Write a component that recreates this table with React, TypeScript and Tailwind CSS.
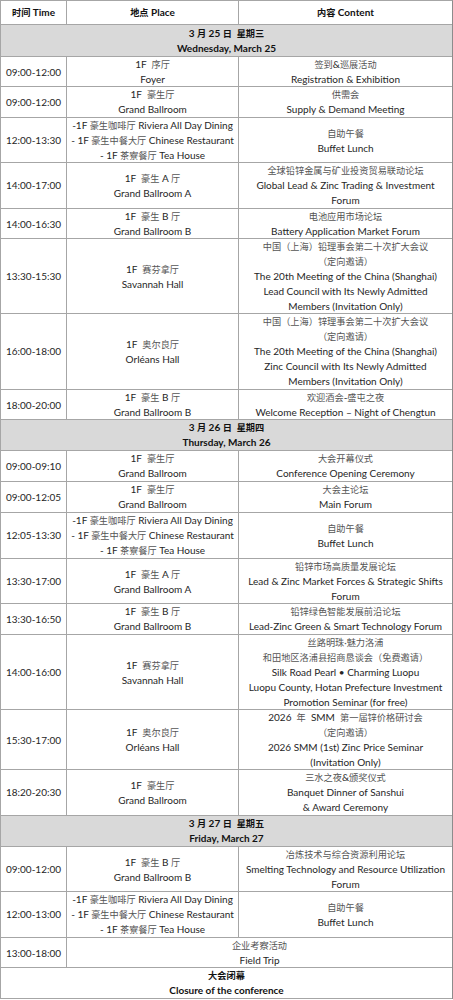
import React from "react";

type Row =
  | { kind: "head" }
  | { kind: "day"; h: number; cn: string; en: string }
  | { kind: "row"; h: number; time: string; place: string[]; content: string[] }
  | { kind: "trip"; h: number; time: string; content: string[] }
  | { kind: "close"; h: number; cn: string; en: string };

const dining = ["-1F 豪生咖啡厅 Riviera All Day Dining", "- 1F 豪生中餐大厅 Chinese Restaurant", "- 1F 茶寮餐厅 Tea House"];
const lunch = ["自助午餐", "Buffet Lunch"];

const rows: Row[] = [
  { kind: "head" },
  { kind: "day", h: 32, cn: "3 月 25 日  星期三", en: "Wednesday, March 25" },
  { kind: "row", h: 30, time: "09:00-12:00", place: ["1F  序厅", "Foyer"], content: ["签到&巡展活动", "Registration & Exhibition"] },
  { kind: "row", h: 31, time: "09:00-12:00", place: ["1F  豪生厅", "Grand Ballroom"], content: ["供需会", "Supply & Demand Meeting"] },
  { kind: "row", h: 45, time: "12:00-13:30", place: dining, content: lunch },
  {
    kind: "row",
    h: 46,
    time: "14:00-17:00",
    place: ["1F  豪生 A 厅", "Grand Ballroom A"],
    content: ["全球铅锌金属与矿业投资贸易联动论坛", "Global Lead & Zinc Trading & Investment", "Forum"],
  },
  { kind: "row", h: 30, time: "14:00-16:30", place: ["1F  豪生 B 厅", "Grand Ballroom B"], content: ["电池应用市场论坛", "Battery Application Market Forum"] },
  {
    kind: "row",
    h: 75,
    time: "13:30-15:30",
    place: ["1F  赛芬拿厅", "Savannah Hall"],
    content: ["中国（上海）铅理事会第二十次扩大会议", "（定向邀请）", "The 20th Meeting of the China (Shanghai)", "Lead Council with Its Newly Admitted", "Members (Invitation Only)"],
  },
  {
    kind: "row",
    h: 76,
    time: "16:00-18:00",
    place: ["1F  奥尔良厅", "Orléans Hall"],
    content: ["中国（上海）锌理事会第二十次扩大会议", "（定向邀请）", "The 20th Meeting of the China (Shanghai)", "Zinc Council with Its Newly Admitted", "Members (Invitation Only)"],
  },
  { kind: "row", h: 30, time: "18:00-20:00", place: ["1F  豪生 B 厅", "Grand Ballroom B"], content: ["欢迎酒会-盛屯之夜", "Welcome Reception – Night of Chengtun"] },
  { kind: "day", h: 31, cn: "3 月 26 日  星期四", en: "Thursday, March 26" },
  { kind: "row", h: 31, time: "09:00-09:10", place: ["1F  豪生厅", "Grand Ballroom"], content: ["大会开幕仪式", "Conference Opening Ceremony"] },
  { kind: "row", h: 31, time: "09:00-12:05", place: ["1F  豪生厅", "Grand Ballroom"], content: ["大会主论坛", "Main Forum"] },
  { kind: "row", h: 46, time: "12:05-13:30", place: dining, content: lunch },
  {
    kind: "row",
    h: 45,
    time: "13:30-17:00",
    place: ["1F  豪生 A 厅", "Grand Ballroom A"],
    content: ["铅锌市场高质量发展论坛", "Lead & Zinc Market Forces & Strategic Shifts", "Forum"],
  },
  {
    kind: "row",
    h: 31,
    time: "13:30-16:50",
    place: ["1F  豪生 B 厅", "Grand Ballroom B"],
    content: ["铅锌绿色智能发展前沿论坛", "Lead-Zinc Green & Smart Technology Forum"],
  },
  {
    kind: "row",
    h: 75,
    time: "14:00-16:00",
    place: ["1F  赛芬拿厅", "Savannah Hall"],
    content: ["丝路明珠·魅力洛浦", "和田地区洛浦县招商恳谈会（免费邀请）", "Silk Road Pearl • Charming Luopu", "Luopu County, Hotan Prefecture Investment", "Promotion Seminar (for free)"],
  },
  {
    kind: "row",
    h: 60,
    time: "15:30-17:00",
    place: ["1F  奥尔良厅", "Orléans Hall"],
    content: ["2026  年  SMM  第一届锌价格研讨会", "（定向邀请）", "2026 SMM (1st) Zinc Price Seminar", "(Invitation Only)"],
  },
  {
    kind: "row",
    h: 46,
    time: "18:20-20:30",
    place: ["1F  豪生厅", "Grand Ballroom"],
    content: ["三水之夜&颁奖仪式", "Banquet Dinner of Sanshui", "& Award Ceremony"],
  },
  { kind: "day", h: 31, cn: "3 月 27 日  星期五", en: "Friday, March 27" },
  {
    kind: "row",
    h: 45,
    time: "09:00-12:00",
    place: ["1F  豪生 B 厅", "Grand Ballroom B"],
    content: ["冶炼技术与综合资源利用论坛", "Smelting Technology and Resource Utilization", "Forum"],
  },
  { kind: "row", h: 46, time: "12:00-13:00", place: dining, content: lunch },
  { kind: "trip", h: 30, time: "13:00-18:00", content: ["企业考察活动", "Field Trip"] },
  { kind: "close", h: 31, cn: "大会闭幕", en: "Closure of the conference" },
];

// CJK runs are set a touch smaller, like the source document
function Mixed({ text }: { text: string }) {
  const parts = text.split(/([\u3000-\u303f\u4e00-\u9fff\uff00-\uffef·]+)/);
  return (
    <span className="whitespace-pre">
      {parts.map((p, i) =>
        i % 2 === 1 ? (
          <span key={i} className="text-[9.2px] text-[#555]">
            {p}
          </span>
        ) : (
          <React.Fragment key={i}>{p}</React.Fragment>
        )
      )}
    </span>
  );
}

function Lines({ lines }: { lines: string[] }) {
  return (
    <div className="flex flex-col items-center text-center">
      {lines.map((l, i) => (
        <div key={i} className="whitespace-pre leading-[15px]">
          <Mixed text={l} />
        </div>
      ))}
    </div>
  );
}

export default function App() {
  return (
    <div
      className="w-[453px] bg-white text-[10px] text-[#262626]"
      style={{ fontFamily: 'Lato, "Noto Sans CJK SC", sans-serif' }}
    >
      <div className="border-t border-l border-r border-[#a6a6a6] border-r-[#8c8c8c]">
        {rows.map((r, i) => {
          if (r.kind === "head") {
            return (
              <div key={i} className="grid h-[24px] grid-cols-[66px_172px_1fr] border-b border-[#a6a6a6] font-bold text-[#111] [&_span_span]:text-[#111]">
                <div className="flex items-center justify-center border-r border-[#a6a6a6]">
                  <Mixed text="时间 Time" />
                </div>
                <div className="flex items-center justify-center border-r border-[#a6a6a6]">
                  <Mixed text="地点 Place" />
                </div>
                <div className="flex items-center justify-center">
                  <Mixed text="内容 Content" />
                </div>
              </div>
            );
          }
          if (r.kind === "day" || r.kind === "close") {
            return (
              <div
                key={i}
                className={`flex items-center justify-center border-b border-[#a6a6a6] font-bold text-[#111] ${r.kind === "day" ? "bg-[#d9d9d9]" : "bg-white"}`}
                style={{ height: r.h }}
              >
                <div className="flex flex-col items-center text-center">
                  <div className="whitespace-pre leading-[15px] [&_span_span]:text-[#111]">
                    <Mixed text={r.cn} />
                  </div>
                  <div className="whitespace-pre leading-[15px]">{r.en}</div>
                </div>
              </div>
            );
          }
          if (r.kind === "trip") {
            return (
              <div key={i} className="grid grid-cols-[66px_1fr] border-b border-[#a6a6a6]" style={{ height: r.h }}>
                <div className="flex items-center justify-center border-r border-[#a6a6a6]">{r.time}</div>
                <div className="flex items-center justify-center">
                  <Lines lines={r.content} />
                </div>
              </div>
            );
          }
          return (
            <div key={i} className="grid grid-cols-[66px_172px_1fr] border-b border-[#a6a6a6]" style={{ height: r.h }}>
              <div className="flex items-center justify-center border-r border-[#a6a6a6]">{r.time}</div>
              <div className="flex items-center justify-center border-r border-[#a6a6a6]">
                <Lines lines={r.place} />
              </div>
              <div className="flex items-center justify-center">
                <Lines lines={r.content} />
              </div>
            </div>
          );
        })}
      </div>
    </div>
  );
}
